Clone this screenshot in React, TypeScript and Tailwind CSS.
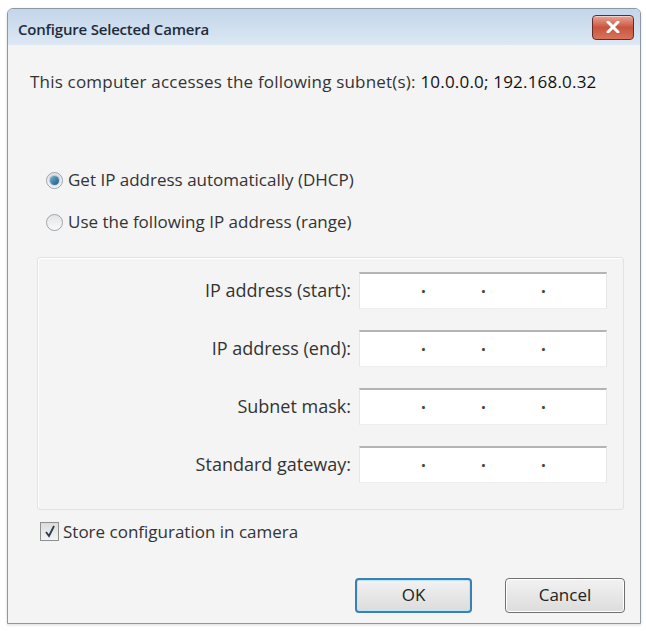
import React from "react";

function IpField() {
  return (
    <div className="w-[248px] h-[37px] bg-white border-t-2 border-t-[#b4b4b4] border-x border-b border-x-[#e6e6e6] border-b-[#eeeeee] flex items-center">
      <div className="w-[61px]" />
      <span className="w-[60px] text-[#444] font-bold leading-none">·</span>
      <span className="w-[60px] text-[#444] font-bold leading-none">·</span>
      <span className="text-[#444] font-bold leading-none">·</span>
    </div>
  );
}

function FieldRow({ label }: { label: string }) {
  return (
    <div className="flex items-center">
      <div className="w-[321px] pr-[8px] text-right text-[18px] text-[#333]">{label}</div>
      <IpField />
    </div>
  );
}

function Radio({ checked, label }: { checked?: boolean; label: string }) {
  return (
    <label className="flex items-center gap-[5px]">
      <span className="w-[17px] h-[17px] rounded-full border border-[#9aa4ad] bg-gradient-to-b from-[#e4e4e4] to-[#fafafa] flex items-center justify-center">
        {checked && (
          <span className="w-[9px] h-[9px] rounded-full bg-gradient-to-br from-[#6fb3d8] to-[#1c5a80] shadow-[0_0_2px_#2a6a92]" />
        )}
      </span>
      <span>{label}</span>
    </label>
  );
}

export default function App() {
  return (
    <div
      className="w-[646px] h-[631px] bg-white pt-[8px] pl-[7px]"
      style={{ fontFamily: '"Open Sans", "Noto Sans", sans-serif' }}
    >
      <div className="w-[634px] h-[616px] border border-[#8c98a4] rounded-t-[6px] overflow-hidden shadow-[0_1px_3px_rgba(0,0,0,0.15)] flex flex-col bg-[#f4f4f4]">
        {/* title bar */}
        <div className="h-[36px] shrink-0 bg-gradient-to-b from-[#c3d6ea] to-[#dce8f3] flex items-center justify-between pl-[10px] pr-[6px]">
          <span className="mt-[4px] text-[15px] font-semibold text-[#1e2c3a] tracking-[-0.2px]">Configure Selected Camera</span>
          <div className="w-[42px] h-[25px] rounded-[4px] border border-[#6a2a24] bg-gradient-to-b from-[#e8a493] via-[#c9543f] to-[#d8735c] flex items-center justify-center shadow-[inset_0_1px_0_rgba(255,255,255,0.5)]">
            <svg width="14" height="12" viewBox="0 0 14 12">
              <path d="M2 1 L12 11 M12 1 L2 11" stroke="#fff" strokeWidth="3" strokeLinecap="round" />
            </svg>
          </div>
        </div>

        {/* body */}
        <div className="flex-1 flex flex-col pl-[22px] pr-[15px] text-[17px] text-[#333]">
          <p className="mt-[26px] leading-[22px] tracking-[0.2px]">
            This computer accesses the following subnet(s):{" "}
            <span className="text-[#111]">10.0.0.0; 192.168.0.32</span>
          </p>

          <div className="mt-[76px] ml-[16px] flex flex-col gap-[20px] leading-[22px]">
            <Radio checked label="Get IP address automatically (DHCP)" />
            <Radio label="Use the following IP address (range)" />
          </div>

          <div className="mt-[24px] ml-[7px] w-[587px] h-[253px] border border-[#e2e2e2] rounded-[3px] shadow-[inset_1px_1px_0_#fff] flex flex-col pt-[14px] gap-[21px]">
            <FieldRow label="IP address (start):" />
            <FieldRow label="IP address (end):" />
            <FieldRow label="Subnet mask:" />
            <FieldRow label="Standard gateway:" />
          </div>

          <label className="mt-[9px] ml-[10px] flex items-center gap-[4px]">
            <span className="w-[19px] h-[19px] border border-[#8e8f8f] bg-gradient-to-b from-[#dcdcdc] to-[#f4f4f4] flex items-center justify-center">
              <svg width="12" height="13" viewBox="0 0 12 13">
                <path d="M2 7 L5 11 L10 1" fill="none" stroke="#2b3a50" strokeWidth="1.8" />
              </svg>
            </span>
            <span>Store configuration in camera</span>
          </label>

          <div className="mt-[33px] flex justify-end gap-[33px]">
            <button className="w-[117px] h-[35px] rounded-[4px] border-2 border-[#3c7fb1] bg-gradient-to-b from-[#f2f2f2] to-[#dcdcdc] shadow-[inset_0_0_0_1px_#bfe6f8] text-[#222]">
              OK
            </button>
            <button className="w-[120px] h-[35px] rounded-[4px] border border-[#707070] bg-gradient-to-b from-[#f2f2f2] to-[#dcdcdc] shadow-[inset_0_0_0_1px_#fff] text-[#222]">
              Cancel
            </button>
          </div>
        </div>
      </div>
    </div>
  );
}
